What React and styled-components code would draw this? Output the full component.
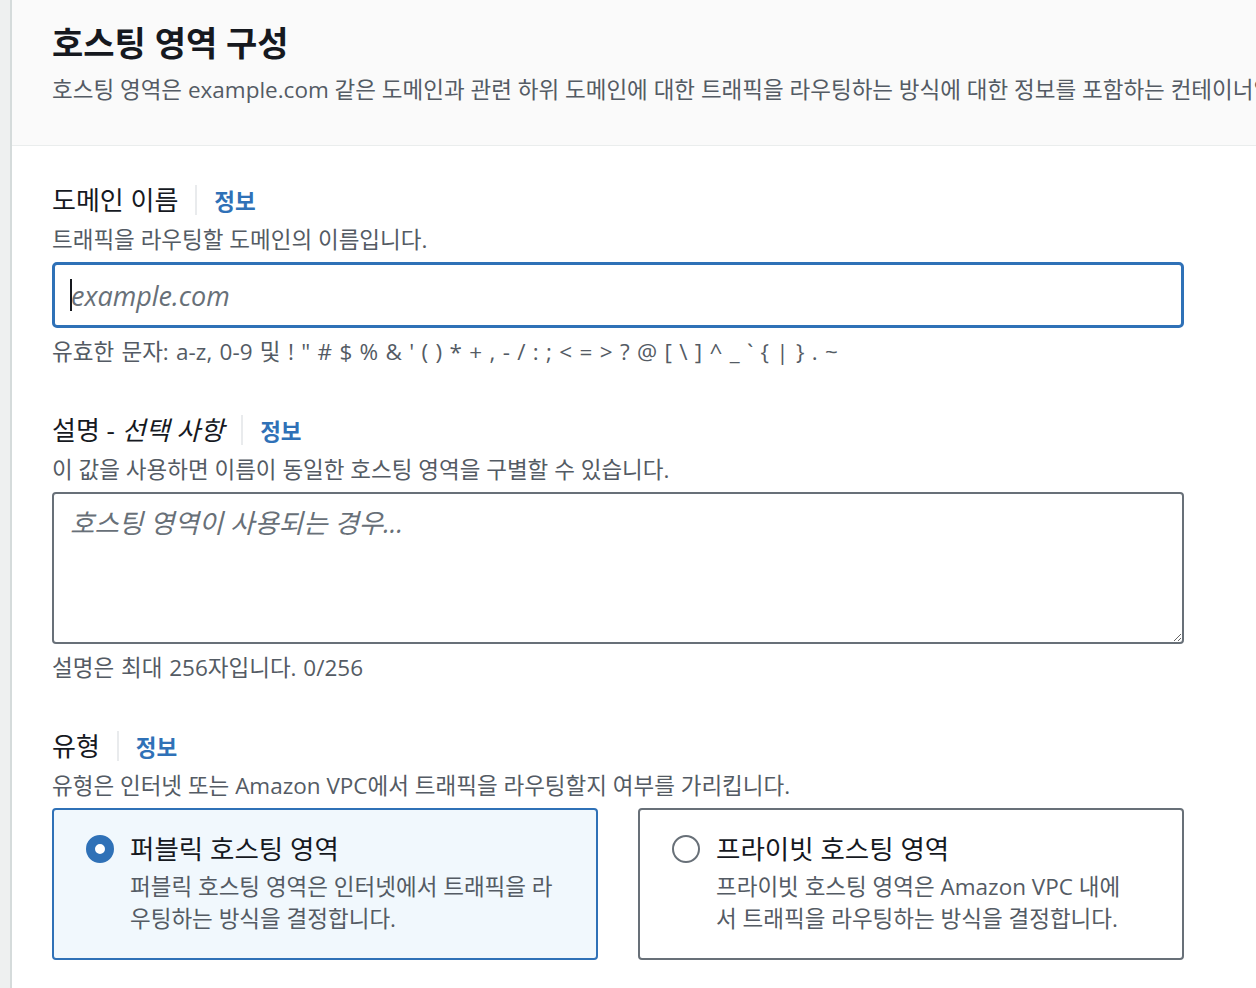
import React from "react";
import styled, { createGlobalStyle } from "styled-components";

const GlobalStyle = createGlobalStyle`
  html, body {
    margin: 0;
    padding: 0;
    background: #eef0f0;
    overflow: hidden;
  }
  body {
    font-family: "Open Sans", "Noto Sans CJK KR", sans-serif;
    color: #16191f;
  }
`;

const Page = styled.div`
  display: flex;
  padding-left: 10px;
  min-height: 988px;
`;

const Container = styled.div`
  flex: 1;
  min-width: 0;
  background: #ffffff;
  border-left: 2px solid #d5dbdb;
  overflow: hidden;
`;

const Header = styled.header`
  background: #fafafa;
  border-bottom: 1px solid #eaeded;
  padding: 21px 40px 0;
  height: 146px;
  box-sizing: border-box;
`;

const Title = styled.h2`
  margin: 0;
  font-size: 34px;
  line-height: 44px;
  font-weight: 700;
`;

const HeaderText = styled.p`
  margin: 10px 0 0;
  font-size: 22.5px;
  line-height: 30px;
  color: #545b64;
  white-space: nowrap;
`;

const Form = styled.div`
  width: 1132px;
  padding: 37px 0 0 40px;
`;

const Field = styled.section`
  margin-bottom: ${p => p.gap || 46}px;
`;

const LabelRow = styled.div`
  display: flex;
  align-items: center;
  height: 34px;
`;

const Label = styled.span`
  font-size: 26px;
  line-height: 30px;
  padding-right: 17px;
  border-right: 2px solid #e9ebed;

  em {
    font-style: italic;
  }
`;

const InfoLink = styled.a`
  margin-left: 17px;
  font-size: 22.5px;
  font-weight: 700;
  color: #2f71b7;
  text-decoration: none;
`;

const Hint = styled.div`
  font-size: 22.5px;
  line-height: 28px;
  color: #545b64;
  margin-top: ${p => p.top || 9}px;
  word-spacing: ${p => p.spread || 0}px;
`;

const InputWrap = styled.div`
  position: relative;
  margin-top: 8px;
`;

const TextInput = styled.input`
  display: block;
  width: 100%;
  box-sizing: border-box;
  height: 66px;
  border: 3px solid #2f71b7;
  border-radius: 5px;
  padding: 0 16px;
  font-family: inherit;
  font-size: 27px;
  outline: none;
  background: #fff;

  &::placeholder {
    color: #687078;
    font-style: italic;
  }
`;

const Caret = styled.span`
  position: absolute;
  left: 18px;
  top: 17px;
  width: 2px;
  height: 32px;
  background: #16191f;
`;

const TextArea = styled.textarea`
  display: block;
  width: 100%;
  box-sizing: border-box;
  height: 152px;
  margin-top: 8px;
  border: 2px solid #687078;
  border-radius: 4px;
  padding: 12px 16px;
  font-family: inherit;
  font-size: 26.5px;
  line-height: 34px;
  outline: none;
  resize: vertical;

  &::placeholder {
    color: #687078;
    font-style: italic;
  }
`;

const Cards = styled.div`
  display: grid;
  grid-template-columns: 1fr 1fr;
  gap: 40px;
  margin-top: 8px;
`;

const Card = styled.label`
  display: flex;
  align-items: flex-start;
  gap: 16px;
  height: 152px;
  box-sizing: border-box;
  padding: 22px 42px 0 32px;
  border: 2px solid ${p => (p.selected ? "#2f71b7" : "#687078")};
  border-radius: 4px;
  background: ${p => (p.selected ? "#f1f8fd" : "#ffffff")};
`;

const Radio = styled.span`
  flex: none;
  width: 28px;
  height: 28px;
  margin-top: 3px;
  box-sizing: border-box;
  border-radius: 50%;
  border: ${p => (p.checked ? "9px solid #2f71b7" : "2px solid #687078")};
  background: #fff;
`;

const CardBody = styled.div`
  min-width: 0;
  flex: 1;
`;

const CardTitle = styled.div`
  font-size: 26.5px;
  line-height: 34px;
`;

const CardText = styled.div`
  margin-top: 5px;
  font-size: 22.5px;
  line-height: 32px;
  color: #545b64;
`;

const options = [
  {
    title: "퍼블릭 호스팅 영역",
    text: "퍼블릭 호스팅 영역은 인터넷에서 트래픽을 라우팅하는 방식을 결정합니다.",
    selected: true
  },
  {
    title: "프라이빗 호스팅 영역",
    text: "프라이빗 호스팅 영역은 Amazon VPC 내에서 트래픽을 라우팅하는 방식을 결정합니다.",
    selected: false
  }
];

export default function App() {
  return (
    <>
      <GlobalStyle />
      <Page>
        <Container>
          <Header>
            <Title>호스팅 영역 구성</Title>
            <HeaderText>
              호스팅 영역은 example.com 같은 도메인과 관련 하위 도메인에 대한 트래픽을 라우팅하는 방식에 대한 정보를 포함하는 컨테이너입니다.
            </HeaderText>
          </Header>
          <Form>
            <Field gap={47}>
              <LabelRow>
                <Label>도메인 이름</Label>
                <InfoLink href="#">정보</InfoLink>
              </LabelRow>
              <Hint>트래픽을 라우팅할 도메인의 이름입니다.</Hint>
              <InputWrap>
                <TextInput placeholder="example.com" readOnly />
                <Caret />
              </InputWrap>
              <Hint top={10} spread={1.5}>
                유효한 문자: a-z, 0-9 및 ! " # $ % &amp; ' ( ) * + , - / : ; &lt; = &gt; ? @ [ \ ] ^ _ ` {"{"} | {"}"} . ~
              </Hint>
            </Field>
            <Field gap={47}>
              <LabelRow>
                <Label>
                  설명 - <em>선택 사항</em>
                </Label>
                <InfoLink href="#">정보</InfoLink>
              </LabelRow>
              <Hint>이 값을 사용하면 이름이 동일한 호스팅 영역을 구별할 수 있습니다.</Hint>
              <TextArea placeholder="호스팅 영역이 사용되는 경우..." readOnly />
              <Hint top={10} spread={1}>
                설명은 최대 256자입니다. 0/256
              </Hint>
            </Field>
            <Field>
              <LabelRow>
                <Label>유형</Label>
                <InfoLink href="#">정보</InfoLink>
              </LabelRow>
              <Hint>유형은 인터넷 또는 Amazon VPC에서 트래픽을 라우팅할지 여부를 가리킵니다.</Hint>
              <Cards>
                {options.map(o => (
                  <Card key={o.title} selected={o.selected}>
                    <Radio checked={o.selected} />
                    <CardBody>
                      <CardTitle>{o.title}</CardTitle>
                      <CardText>{o.text}</CardText>
                    </CardBody>
                  </Card>
                ))}
              </Cards>
            </Field>
          </Form>
        </Container>
      </Page>
    </>
  );
}
